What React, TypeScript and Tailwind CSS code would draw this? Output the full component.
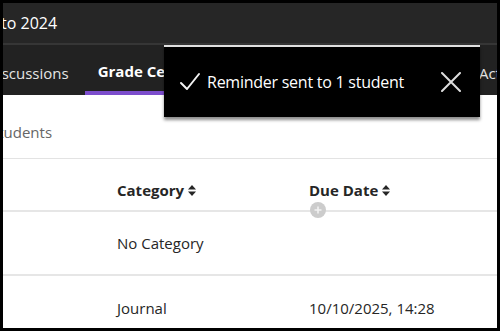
import React from 'react';

function SortIcon() {
  return (
    <svg width="8" height="11" viewBox="0 0 8 11" className="ml-1 inline-block">
      <path d="M4 0 L8 4.5 L0 4.5 Z" fill="#262626" />
      <path d="M4 11 L8 6.5 L0 6.5 Z" fill="#262626" />
    </svg>
  );
}

export default function App() {
  const font = { fontFamily: '"Open Sans", "Noto Sans", sans-serif' };
  return (
    <div className="w-[500px] h-[331px] border-[3px] border-black bg-white relative overflow-hidden" style={font}>
      {/* Course title bar */}
      <div className="h-[42px] bg-[#262626] flex items-center border-b-2 border-[#363636]">
        <span className="ml-[-2px] text-[16px] text-white">to 2024</span>
      </div>

      {/* Tabs */}
      <div className="h-[50px] bg-[#222222] flex items-stretch text-[15px] whitespace-nowrap">
        <div className="ml-[-16px] pt-[6px] flex items-center text-[#e5e5e5]">Discussions</div>
        <div className="ml-[16px] px-[13px] pt-[6px] flex items-center font-bold text-white border-b-4 border-[#7c4dcc]">
          Grade Center
        </div>
        <div className="ml-auto mr-[-32px] pt-[6px] flex items-center text-[#e5e5e5]">Activity</div>
      </div>

      {/* Content */}
      <div className="h-[64px] pt-[12px] flex items-center text-[15px] text-[#666666] border-b border-[#e3e3e3]">
        <span className="ml-[-13px]">Students</span>
      </div>

      <div className="relative">
        <div className="h-[53px] pt-[11px] grid grid-cols-[114px_192px_1fr] items-center border-b-2 border-[#e6e6e6] text-[15px] font-bold text-[#262626]">
          <div />
          <div className="flex items-center">Category<SortIcon /></div>
          <div className="flex items-center">Due Date<SortIcon /></div>
        </div>
        <div className="absolute left-[307px] top-[43px] w-[16px] h-[16px] rounded-full bg-[#cccccc] flex items-center justify-center">
          <svg width="8" height="8" viewBox="0 0 8 8">
            <path d="M4 0.5 V7.5 M0.5 4 H7.5" stroke="#f2f2f2" strokeWidth="1.6" />
          </svg>
        </div>
        <div className="h-[64px] grid grid-cols-[114px_192px_1fr] items-center border-b-2 border-[#e6e6e6] text-[15px] text-[#262626]">
          <div />
          <div>No Category</div>
          <div />
        </div>
        <div className="h-[64px] grid grid-cols-[114px_192px_1fr] items-center text-[15px] text-[#262626]">
          <div />
          <div>Journal</div>
          <div>10/10/2025, 14:28</div>
        </div>
      </div>

      {/* Toast */}
      <div className="absolute left-[161px] top-[42px] w-[316px] h-[72px] bg-black border-t-2 border-[#e0e0e0] shadow-[0_3px_3px_rgba(0,0,0,0.45)] flex items-center text-white">
        <svg width="22" height="20" viewBox="0 0 22 20" className="ml-[15px]">
          <path d="M2 11 L8 17 L20 2" fill="none" stroke="#f2f2f2" strokeWidth="2" strokeLinecap="round" strokeLinejoin="round" />
        </svg>
        <span className="ml-[6px] text-[16px] tracking-[-0.25px]">Reminder sent to 1 student</span>
        <svg width="20" height="20" viewBox="0 0 20 20" className="ml-auto mr-[19px]">
          <path d="M1 1 L19 19 M19 1 L1 19" stroke="#dddddd" strokeWidth="2" strokeLinecap="round" />
        </svg>
      </div>
    </div>
  );
}
